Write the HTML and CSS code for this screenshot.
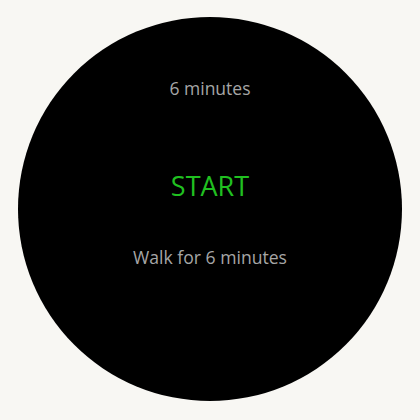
FILE: index.html
```html
<!DOCTYPE html>
<html>
<head>
<meta charset="utf-8">
<link rel="stylesheet" href="styles.css">
</head>
<body>
<div class="watch">
  <div class="duration">6 minutes</div>
  <div class="start">START</div>
  <div class="desc">Walk for 6 minutes</div>
</div>
</body>
</html>
```
FILE: styles.css
```css
html, body {
  margin: 0;
  padding: 0;
  background: #f8f7f3;
}
body {
  width: 420px;
  height: 420px;
  font-family: "Open Sans", "Noto Sans", sans-serif;
}
.watch {
  width: 384px;
  height: 384px;
  margin: 17px 0 0 18px;
  border-radius: 50%;
  background: #000;
  display: flex;
  flex-direction: column;
  align-items: center;
  box-sizing: border-box;
  padding-top: 59px;
}
.duration {
  font-size: 17.5px;
  line-height: 24px;
  color: #a6a6a6;
}
.start {
  margin-top: 68px;
  font-size: 27px;
  line-height: 36px;
  color: #20c020;
}
.desc {
  margin-top: 41px;
  font-size: 17.6px;
  line-height: 24px;
  color: #a6a6a6;
}
```
